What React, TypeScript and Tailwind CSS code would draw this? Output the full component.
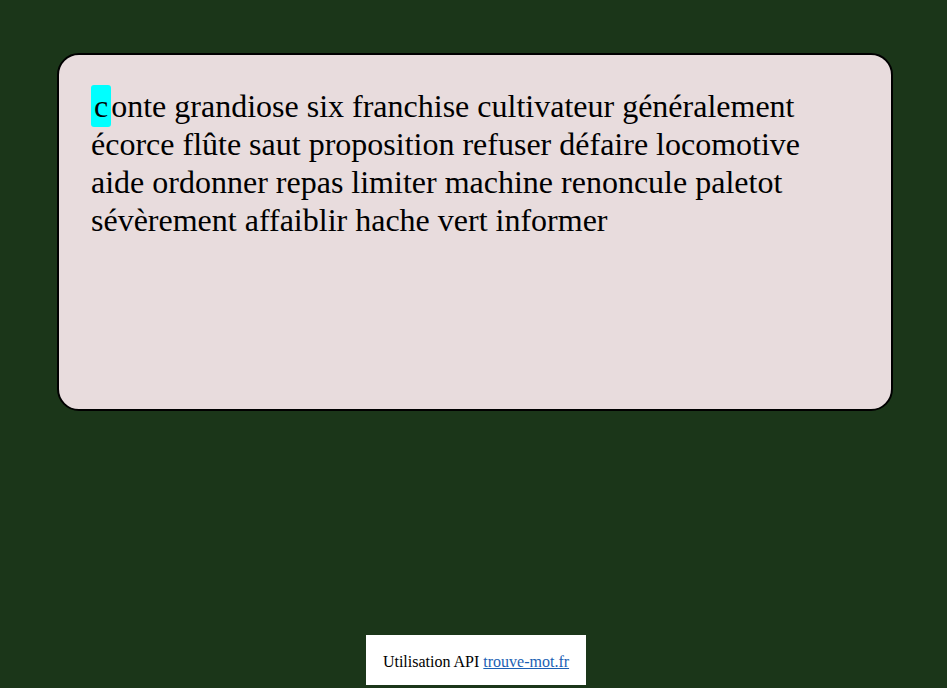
export default function App() {
  const words =
    'onte grandiose six franchise cultivateur généralement écorce flûte saut proposition refuser défaire locomotive aide ordonner repas limiter machine renoncule paletot sévèrement affaiblir hache vert informer';

  return (
    <div className="min-h-[688px] bg-[#1b3619] flex flex-col font-['Liberation_Serif',serif]">
      <div className="ml-[57px] mt-[53px] w-[836px] h-[358px] rounded-[22px] border-2 border-black bg-[#e8dcdd] px-[32px] pt-[32px]">
        <p className="text-[32px] leading-[38px] text-black">
          <span className="bg-[#00ffff] rounded-[3px] px-[3px] py-[3px]">c</span>
          {words}
        </p>
      </div>
      <div className="mt-auto mb-[3px] ml-[366px] bg-white w-[220px] h-[50px] flex items-center justify-center pt-[3px] text-[16px] text-black">
        <span>
          Utilisation API{' '}
          <a href="#" className="text-[#1a5fb4] underline">
            trouve-mot.fr
          </a>
        </span>
      </div>
    </div>
  );
}
